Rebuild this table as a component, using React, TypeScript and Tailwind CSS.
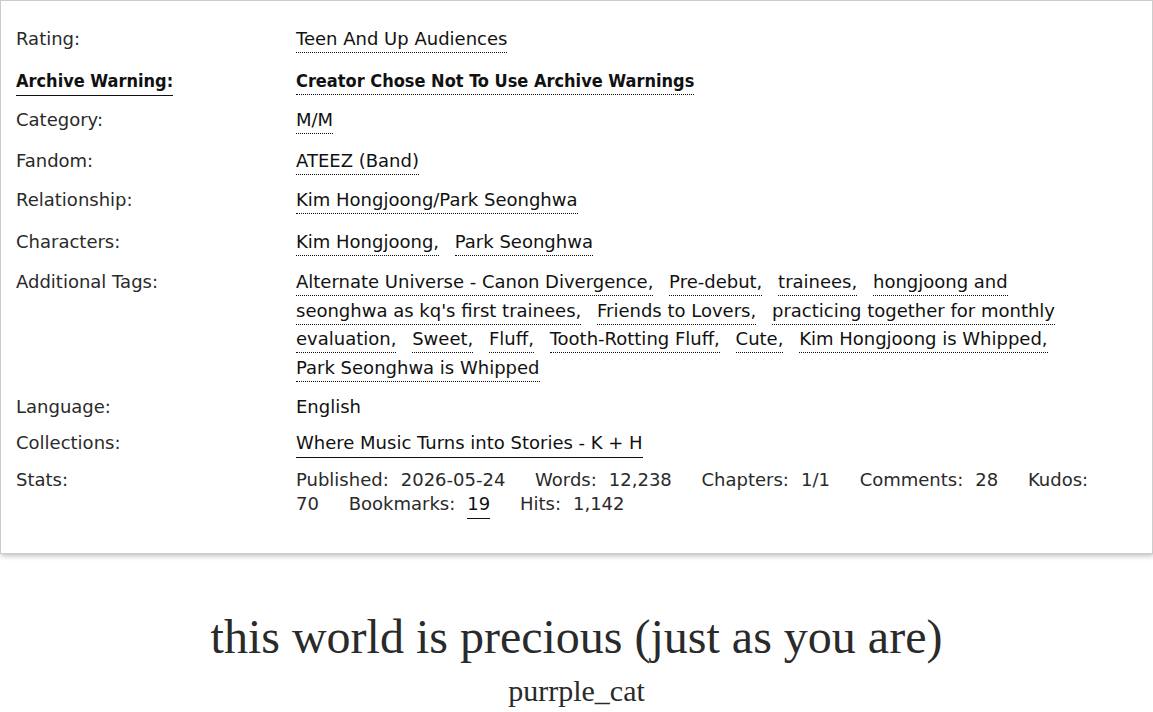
import React from 'react';

const tags = [
  'Alternate Universe - Canon Divergence',
  'Pre-debut',
  'trainees',
  "hongjoong and seonghwa as kq's first trainees",
  'Friends to Lovers',
  'practicing together for monthly evaluation',
  'Sweet',
  'Fluff',
  'Tooth-Rotting Fluff',
  'Cute',
  'Kim Hongjoong is Whipped',
  'Park Seonghwa is Whipped',
];

const stats: [string, string][] = [
  ['Published:', '2026-05-24'],
  ['Words:', '12,238'],
  ['Chapters:', '1/1'],
  ['Comments:', '28'],
  ['Kudos:', '70'],
  ['Bookmarks:', '19'],
  ['Hits:', '1,142'],
];

const Tag = ({ children, last }: { children: React.ReactNode; last?: boolean }) => (
  <>
    <span className={`border-b border-dotted border-[#111] pb-[3px] ${last ? '' : 'mr-[10px]'}`}>
      {children}
      {last ? '' : ','}
    </span>
    {last ? null : ' '}
  </>
);

const Row = ({ label, children, bold, className = 'mb-[12px]' }: { label: string; children: React.ReactNode; bold?: boolean; className?: string }) => (
  <div className={`grid grid-cols-[280px_1fr] ${className}`}>
    <div className="leading-[28px] text-[#2a2a2a]">
      {bold ? (
        <span className="font-['DejaVu_Sans_Condensed','DejaVu_Sans',sans-serif] font-bold text-[#111] border-b border-[#111] pb-[4px]">{label}</span>
      ) : (
        label
      )}
    </div>
    <div className="leading-[28.5px] text-[#111] pr-[70px]">{children}</div>
  </div>
);

export default function App() {
  return (
    <div className="bg-white min-h-[712px] font-['DejaVu_Sans',sans-serif] text-[18px]">
      <div className="border border-[#ccc] shadow-[1px_2px_5px_rgba(0,0,0,0.25)] pl-[15px] pt-[24px] pb-[37px]">
        <Row label="Rating:" className="mb-[13px]">
          <Tag last>Teen And Up Audiences</Tag>
        </Row>
        <Row label="Archive Warning:" bold className="mb-[11px]">
          <span className="font-['DejaVu_Sans_Condensed','DejaVu_Sans',sans-serif] font-bold">
            <Tag last>Creator Chose Not To Use Archive Warnings</Tag>
          </span>
        </Row>
        <Row label="Category:">
          <Tag last>M/M</Tag>
        </Row>
        <Row label="Fandom:" className="mb-[11px]">
          <Tag last>ATEEZ (Band)</Tag>
        </Row>
        <Row label="Relationship:" className="mb-[13px]">
          <Tag last>Kim Hongjoong/Park Seonghwa</Tag>
        </Row>
        <Row label="Characters:" className="mb-[12px]">
          <Tag>Kim Hongjoong</Tag>
          <Tag last>Park Seonghwa</Tag>
        </Row>
        <Row label="Additional Tags:" className="mb-[11px]">
          {tags.map((t, i) => (
            <Tag key={t} last={i === tags.length - 1}>
              {t}
            </Tag>
          ))}
        </Row>
        <Row label="Language:" className="mb-[7px]">
          English
        </Row>
        <Row label="Collections:" className="mb-[9px]">
          <span className="border-b border-[#111] pb-[4px]">Where Music Turns into Stories - K + H</span>
        </Row>
        <div className="grid grid-cols-[280px_1fr]">
          <div className="leading-[28px] text-[#2a2a2a]">Stats:</div>
          <div className="leading-[24px] pt-[2px] text-[#2a2a2a] pr-[40px]">
            {stats.map(([k, v]) => (
              <React.Fragment key={k}>
                <span className="mr-[12px]">{k}</span>
                {k === 'Kudos:' ? <br /> : null}
                <span className={`mr-[24px] ${k === 'Bookmarks:' ? 'border-b border-[#111] pb-[4px] text-[#111]' : ''}`}>{v}</span>{' '}
              </React.Fragment>
            ))}
          </div>
        </div>
      </div>
      <div className="text-center text-[#2a2a2a] font-['Liberation_Serif',serif] pt-[53px]">
        <h2 className="text-[48px] leading-[60px]">this world is precious (just as you are)</h2>
        <div className="text-[30px] leading-[40px] mt-[4px]">purrple_cat</div>
      </div>
    </div>
  );
}
